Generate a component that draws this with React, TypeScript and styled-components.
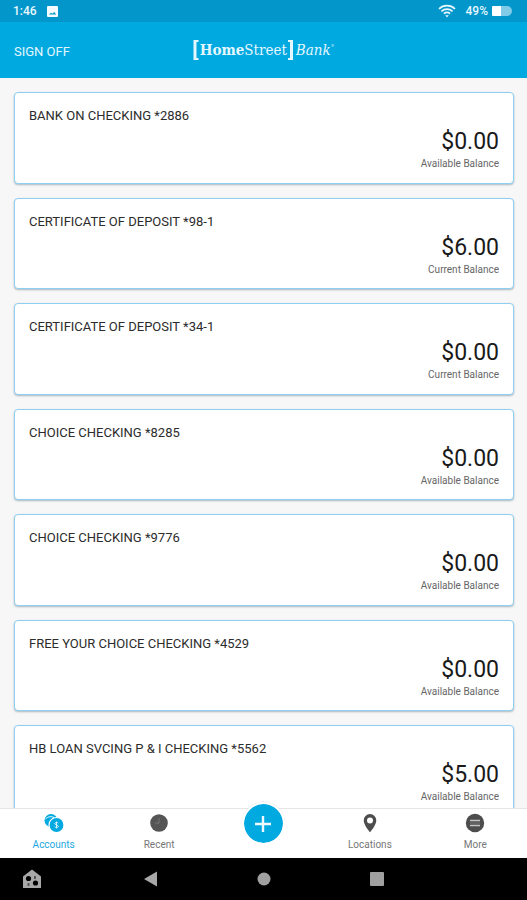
import React from "react";
import styled, { createGlobalStyle } from "styled-components";

const GlobalStyle = createGlobalStyle`
  *, *::before, *::after { box-sizing: border-box; }
  body { margin: 0; background: #f7f7f7; font-family: Roboto, "Liberation Sans", sans-serif; }
  button { font: inherit; border: 0; padding: 0; background: none; cursor: pointer; }
`;

const Screen = styled.div`
  display: flex;
  flex-direction: column;
  height: 100vh;
`;

const StatusBar = styled.div`
  display: flex;
  align-items: center;
  justify-content: space-between;
  flex: none;
  height: 22px;
  padding: 0 15px 0 13px;
  background: #0296cb;
  color: #e9f8fe;
  font-size: 12px;
  font-weight: 500;
`;

const StatusGroup = styled.div<{ $gap: number }>`
  display: flex;
  align-items: center;
  gap: ${(p) => p.$gap}px;
`;

const Header = styled.header`
  display: grid;
  grid-template-columns: 1fr auto 1fr;
  align-items: center;
  flex: none;
  height: 56px;
  padding: 0 14px;
  background: #00a9e0;
  color: #fff;
`;

const SignOff = styled.button`
  justify-self: start;
  color: #e4f7fe;
  font-size: 13px;
  line-height: 20px;
  padding-top: 4px;
`;

const Logo = styled.div`
  display: flex;
  align-items: center;
  height: 24px;
  color: #e4f7fe;
  font-family: "DejaVu Serif Condensed", "DejaVu Serif", serif;
  font-size: 15px;
  line-height: 24px;
  white-space: nowrap;
`;

const LogoBold = styled.b`
  font-weight: 700;
`;

const LogoItalic = styled.i`
  margin-left: 2px;
`;

const LogoMark = styled.sup`
  align-self: flex-start;
  font-size: 4px;
  line-height: 16px;
`;

const Accounts = styled.main`
  flex: 1 1 0;
  min-height: 0;
  overflow-y: auto;
  scrollbar-width: none;
`;

const AccountList = styled.ul`
  display: grid;
  grid-auto-rows: minmax(92px, auto) minmax(91px, auto);
  row-gap: 14px;
  margin: 0;
  padding: 14px 13px 14px 14px;
  list-style: none;
`;

const Card = styled.li`
  display: flex;
  flex-direction: column;
  padding: 13px 14px 8px;
  border: 1px solid #8fd0f2;
  border-radius: 4px;
  background: #fff;
  box-shadow: 0 1px 2px rgba(60, 90, 110, 0.4);
`;

const AccountName = styled.h2`
  margin: 0;
  color: #2c2c2c;
  font-size: 13px;
  font-weight: 400;
  line-height: 20px;
`;

const Amount = styled.div`
  color: #1a1a1a;
  font-size: 23px;
  line-height: 32px;
  text-align: right;
`;

const BalanceKind = styled.div`
  color: #666;
  font-size: 10px;
  line-height: 12px;
  text-align: right;
`;

const TabBar = styled.nav`
  display: grid;
  grid-template-columns: repeat(5, 1fr);
  flex: none;
  height: 50px;
  position: relative;
  background: #fff;
  border-top: 1px solid #e6e6e6;
`;

const Tab = styled.button<{ $active?: boolean }>`
  display: flex;
  flex-direction: column;
  align-items: center;
  gap: 5px;
  padding: 4px 0 0 2px;
  color: ${(p) => (p.$active ? "#1ba9e1" : "#777")};
  font-size: 10px;
  line-height: 14px;
`;

const AddTab = styled.div`
  display: flex;
  justify-content: center;
`;

const AddButton = styled.button`
  display: grid;
  place-items: center;
  flex: none;
  width: 43px;
  height: 43px;
  margin-top: -7px;
  border: 2px solid #fff;
  border-radius: 50%;
  background: #00a9e0;
  background-clip: padding-box;
  box-shadow: 0 -1px 1px rgba(0, 0, 0, 0.06);
`;

const SystemBar = styled.div`
  display: grid;
  grid-template-columns: 94px 1fr 1fr 1fr 94px;
  align-items: center;
  flex: none;
  height: 42px;
  background: #000;
`;

const SystemButton = styled.button<{ $start?: boolean }>`
  display: flex;
  justify-content: ${(p) => (p.$start ? "flex-start" : "center")};
  padding-left: ${(p) => (p.$start ? 22 : 0)}px;
`;

const accounts = [
  { name: "BANK ON CHECKING *2886", amount: "$0.00", kind: "Available Balance" },
  { name: "CERTIFICATE OF DEPOSIT *98-1", amount: "$6.00", kind: "Current Balance" },
  { name: "CERTIFICATE OF DEPOSIT *34-1", amount: "$0.00", kind: "Current Balance" },
  { name: "CHOICE CHECKING *8285", amount: "$0.00", kind: "Available Balance" },
  { name: "CHOICE CHECKING *9776", amount: "$0.00", kind: "Available Balance" },
  { name: "FREE YOUR CHOICE CHECKING *4529", amount: "$0.00", kind: "Available Balance" },
  { name: "HB LOAN SVCING P & I CHECKING *5562", amount: "$5.00", kind: "Available Balance" },
];

const PictureIcon = () => (
  <svg width="11" height="11" viewBox="0 0 11 11" aria-hidden="true">
    <rect width="11" height="11" rx="1" fill="#f4fcff" />
    <path d="M2 8.500 4 6.800l1.400 1L7.200 6l2 2.500z" fill="#0296cb" />
  </svg>
);

const WifiIcon = () => (
  <svg width="18" height="14" viewBox="0 0 18 14" fill="none" stroke="#e9f8fe" aria-hidden="true">
    <path d="M1 4.800C5.500.6 12.500.6 17 4.800" strokeWidth="1.800" />
    <path d="M3.400 7.300c3.300-2.900 7.900-2.900 11.200 0" strokeWidth="1.700" />
    <path d="M5.800 9.600c2-1.600 4.400-1.600 6.400 0" strokeWidth="1.700" />
    <path d="M7.200 11.200h3.600L9 13.600z" fill="#e9f8fe" stroke="none" />
  </svg>
);

const BatteryIcon = () => (
  <svg width="20" height="10" viewBox="0 0 20 10" aria-hidden="true">
    <path d="M9 0h6a5 5 0 0 1 0 10H9z" fill="#81cbe8" />
    <path d="M1 0h8v10H1a1 1 0 0 1-1-1V1a1 1 0 0 1 1-1z" fill="#fff" />
  </svg>
);

const Bracket = ({ right = false }: { right?: boolean }) => (
  <svg width="7" height="22" viewBox="0 0 7 22" fill="none" stroke="#e4f7fe" aria-hidden="true">
    {right ? (
      <>
        <path d="M1 2h3.500M1 20h3.500" strokeWidth="2" />
        <path d="M4.500 1v20" strokeWidth="3" />
      </>
    ) : (
      <>
        <path d="M1 2h4.500M1 20h4.500" strokeWidth="2" />
        <path d="M2 1v20" strokeWidth="3" />
      </>
    )}
  </svg>
);

const CoinsIcon = () => (
  <svg width="20" height="20" viewBox="0 0 20 20" aria-hidden="true">
    <circle cx="7" cy="7.500" r="6.500" fill="#00a9e0" />
    <path d="M1.500 6C4 3.500 7 3 10 4.500" stroke="#fff" strokeWidth="1" fill="none" />
    <circle cx="12.500" cy="12" r="7.500" fill="#00a9e0" stroke="#fff" strokeWidth="1.200" />
    <path d="M14.300 10.200c-.5-1-3.500-1-3.500.5s3.600 1 3.600 2.600-3.200 1.600-3.800.4M12.500 8.500v7" stroke="#d5f1fb" fill="none" />
  </svg>
);

const ClockIcon = () => (
  <svg width="20" height="20" viewBox="0 0 20 20" aria-hidden="true">
    <circle cx="10" cy="10" r="8.800" fill="#555" />
    <path d="M10 5v5H6" stroke="#777" fill="none" />
  </svg>
);

const PinIcon = () => (
  <svg width="20" height="20" viewBox="0 0 20 20" aria-hidden="true">
    <path fillRule="evenodd" d="M10 1a6.300 6.300 0 0 0-6.300 6.400C3.700 12 10 19.200 10 19.200S16.300 12 16.300 7.400A6.300 6.300 0 0 0 10 1zm0 3.500a3 3 0 1 1 0 6 3 3 0 0 1 0-6z" fill="#4d4d4d" />
  </svg>
);

const MoreIcon = () => (
  <svg width="20" height="20" viewBox="0 0 20 20" aria-hidden="true">
    <circle cx="10" cy="10" r="9.200" fill="#4d4d4d" />
    <path d="M5 7.500h10M5 12.500h10" stroke="#c4c4c4" strokeWidth="1.300" />
    <path d="M5 10h10" stroke="#777" />
  </svg>
);

const PlusIcon = () => (
  <svg width="16" height="16" viewBox="0 0 16 16" aria-hidden="true">
    <path d="M8 0v16M0 8h16" stroke="#eefaff" strokeWidth="2.400" />
  </svg>
);

const HomeIcon = () => (
  <svg width="20" height="20" viewBox="0 0 20 20" aria-hidden="true">
    <path d="M1 19V7.500L10 .5l9 7V19z" fill="#a8a8a8" />
    <circle cx="6.500" cy="9.500" r="2.600" fill="#000" />
    <circle cx="13.500" cy="14" r="2.600" fill="#000" />
    <path d="M12 7h2v3h-2zM5.500 14h2v3h-2z" fill="#555" />
  </svg>
);

export default function App() {
  return (
    <>
      <GlobalStyle />
      <Screen>
        <StatusBar>
          <StatusGroup $gap={10}>
            <span>1:46</span>
            <PictureIcon />
          </StatusGroup>
          <StatusGroup $gap={10}>
            <WifiIcon />
            <StatusGroup $gap={4}>
              <span>49%</span>
              <BatteryIcon />
            </StatusGroup>
          </StatusGroup>
        </StatusBar>
        <Header>
          <SignOff type="button">SIGN OFF</SignOff>
          <Logo>
            <Bracket />
            <LogoBold>Home</LogoBold>
            <span>Street</span>
            <Bracket right />
            <LogoItalic>Bank</LogoItalic>
            <LogoMark>®</LogoMark>
          </Logo>
        </Header>
        <Accounts>
          <AccountList>
            {accounts.map((a) => (
              <Card key={a.name}>
                <AccountName>{a.name}</AccountName>
                <Amount>{a.amount}</Amount>
                <BalanceKind>{a.kind}</BalanceKind>
              </Card>
            ))}
          </AccountList>
        </Accounts>
        <TabBar>
          <Tab type="button" $active>
            <CoinsIcon />
            Accounts
          </Tab>
          <Tab type="button">
            <ClockIcon />
            Recent
          </Tab>
          <AddTab>
            <AddButton type="button" aria-label="Add">
              <PlusIcon />
            </AddButton>
          </AddTab>
          <Tab type="button">
            <PinIcon />
            Locations
          </Tab>
          <Tab type="button">
            <MoreIcon />
            More
          </Tab>
        </TabBar>
        <SystemBar>
          <SystemButton type="button" aria-label="Launcher" $start>
            <HomeIcon />
          </SystemButton>
          <SystemButton type="button" aria-label="Back">
            <svg width="14" height="16" viewBox="0 0 14 16" aria-hidden="true">
              <path d="M0 8 13 .5v15z" fill="#a8a8a8" />
            </svg>
          </SystemButton>
          <SystemButton type="button" aria-label="Home">
            <svg width="14" height="14" viewBox="0 0 14 14" aria-hidden="true">
              <circle cx="7" cy="7" r="6.500" fill="#a0a0a0" />
            </svg>
          </SystemButton>
          <SystemButton type="button" aria-label="Overview">
            <svg width="14" height="14" viewBox="0 0 14 14" aria-hidden="true">
              <rect width="14" height="14" rx="1" fill="#a0a0a0" />
            </svg>
          </SystemButton>
        </SystemBar>
      </Screen>
    </>
  );
}
